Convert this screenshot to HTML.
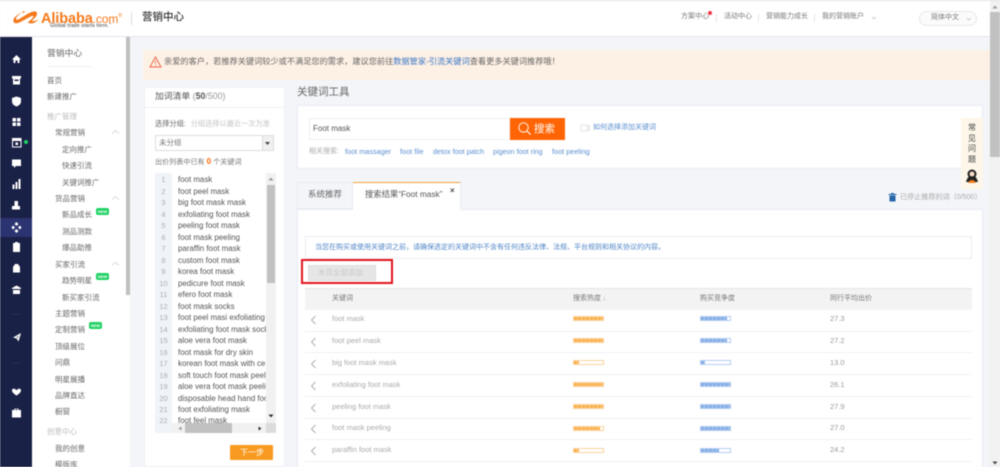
<!DOCTYPE html>
<html lang="zh"><head><meta charset="utf-8"><title>营销中心</title>
<style>
html,body{margin:0;padding:0;width:1000px;height:467px;overflow:hidden;background:#f3f5f9}
body{font-family:"Liberation Sans","Noto Sans CJK SC",sans-serif;color:#666;position:relative}
#r{position:absolute;left:0;top:0;width:1000px;height:467px;overflow:hidden;filter:blur(.45px)}
.b{position:absolute}
.t{position:absolute;white-space:nowrap;line-height:12px;height:12px}
.m{font-size:7.5px;color:#666;margin-top:.7px}
.g{color:#bbb}
.n{position:absolute;background:#1fd162;color:#fff;font-size:4px;line-height:7px;height:7px;width:13px;text-align:center;border-radius:2px;font-weight:bold}
.w{font-size:7.9px;color:#555;left:178px;margin-top:1px}
.i{font-size:7.5px;color:#aab;left:157px;width:13px;text-align:center;margin-top:1px}
.a{color:#3a76c4}
.h{font-size:7px;color:#777;top:293px}
.k{font-size:7.5px;color:#aaa;left:332px}
.v{font-size:7.5px;color:#999;left:830px}
.l{position:absolute;left:305px;width:667px;height:1px;background:#f0f1f4}
.pb{position:absolute;width:29px;height:3px;border:1px solid}
.pb i{display:block;height:3px}
.o{left:573px;border-color:#fcd3a0}.o i{background:repeating-linear-gradient(90deg,#f9b24e 0 3px,#fbc884 3px 4px)}
.u{left:700px;border-color:#b3cdf0}.u i{background:repeating-linear-gradient(90deg,#86aee6 0 3px,#a8c5ee 3px 4px)}
</style></head><body><div id="r">

<!-- header -->
<div class="b" style="left:0;top:0;width:1000px;height:37px;background:#fff;border-top:1px solid #e6e6e6;box-sizing:border-box;border-bottom:1px solid #e3e6ee"></div>
<svg class="b" style="left:11px;top:9px" width="30" height="18" viewBox="0 0 36 22"><path d="M14 4C8 6 3 10 2.500 14C2.500 18 7 18.500 12 15.500L24 9C27 7.500 28 9.500 26 11C24 13 22 15 20 16.500C25 19 30 17 33 12.500C30 15 26 15 25 14.500C29 11 33 7 31 4C29 1.500 24 3.500 20 6L10 12C7 14 5 13 6 11C7 8.500 10 6 14 4Z" fill="#f47a1c"/><path d="M13 3.500L17 2.500L15 5Z" fill="#f47a1c"/></svg>
<div class="t" style="left:41px;top:10px;font-size:14.500px;font-weight:bold;color:#f47a1c;letter-spacing:-.1px">Alibaba<span style="font-weight:normal;font-size:12px">.com</span><span style="font-size:5px;vertical-align:6px;font-weight:normal">®</span></div>
<div class="t" style="left:50px;top:18px;font-size:5.100px;font-weight:bold;color:#777">Global trade starts here.<span style="font-size:3px;vertical-align:2px">™</span></div>
<div class="b" style="left:131px;top:12px;width:1px;height:13px;background:#ddd"></div>
<div class="t" style="left:142px;top:11px;font-size:10.500px;color:#333;font-weight:500">营销中心</div>

<div class="t" style="left:681px;top:11px;font-size:7px;color:#777">方案中心</div>
<div class="b" style="left:708px;top:11px;width:4px;height:4px;border-radius:50%;background:#ee3344"></div>
<div class="b" style="left:716px;top:14px;width:1px;height:8px;background:#e4e4e4"></div>
<div class="t" style="left:724px;top:11px;font-size:7px;color:#777">活动中心</div>
<div class="b" style="left:758px;top:14px;width:1px;height:8px;background:#e4e4e4"></div>
<div class="t" style="left:766px;top:11px;font-size:7px;color:#777">营销能力成长</div>
<div class="b" style="left:814px;top:14px;width:1px;height:8px;background:#e4e4e4"></div>
<div class="t" style="left:822px;top:11px;font-size:7px;color:#777">我的营销账户</div>
<svg class="b" style="left:871px;top:16px" width="6" height="4"><path d="M1 1L3 3L5 1" fill="none" stroke="#bbb" stroke-width=".7"/></svg>
<div class="b" style="left:919px;top:11px;width:58px;height:15px;border:1px solid #e8e8e8;border-radius:8px;box-sizing:border-box;background:#fbfbfb"></div>
<div class="t" style="left:931px;top:12px;font-size:7px;color:#777">简体中文</div>
<svg class="b" style="left:966px;top:17px" width="6" height="4"><path d="M1 1L3 3L5 1" fill="none" stroke="#bbb" stroke-width=".7"/></svg>

<!-- icon sidebar -->
<div class="b" style="left:0;top:37px;width:32px;height:430px;background:#1a2146"></div>
<div class="b" style="left:0;top:218px;width:32px;height:19px;background:#2b3370"></div>
<svg class="b" style="left:0;top:37px" width="32" height="430" fill="#fff">
<path d="M16.500 18L12 22.500H13.500V26H15.500V23.500H17.500V26H19.500V22.500H21Z"/>
<path d="M12 39H21V41.500H20V47.500H13V41.500H12ZM14.500 42.500V44H18.500V42.500Z"/>
<path d="M16.500 59.500L21 61V64.500C21 67 19 68.500 16.500 69.500C14 68.500 12 67 12 64.500V61Z"/>
<path d="M12.500 81H16V84.500H12.500ZM17 81H20.500V84.500H17ZM12.500 85.500H16V89H12.500ZM17 85.500H20.500V89H17Z"/>
<path d="M12 101H21.500V110.500H12ZM13 104V109.500H20.500V104ZM15.500 105.500H18V108H15.500Z" fill-rule="evenodd"/>
<path d="M12 122.500H21V129H16L14 131V129H12Z"/>
<path d="M12.500 147.500H14.500V152H12.500ZM15.500 145H17.500V152H15.500ZM18.500 142H20.500V152H18.500Z"/>
<path d="M14.500 164H18V169H20V172.500H12V169H14.500Z"/>
<path d="M16.500 185L18.500 187L16.500 189L14.500 187ZM13 188.500L15 190.500L13 192.500L11.500 190.500ZM20 188.500L21.500 190.500L20 192.500L18 190.500ZM16.500 192L18.500 194L16.500 196L14.500 194Z"/>
<path d="M13 206H15V205H18V206H20V215H13Z"/>
<path d="M15 227H18L20 230V235.500H13V230Z"/>
<path d="M16.500 248.500L21 251V252H12V251ZM13 253H20V257H13Z"/>
<rect x="12" y="277" width="9" height=".6" fill="#333a5e"/>
<path d="M21 296L18.500 304.500L16.500 301.500L13 300.500ZM16.500 300.500L19 298.500L17.500 301Z" fill-rule="evenodd"/>
<rect x="12" y="326" width="9" height=".6" fill="#333a5e"/>
<path d="M16.500 353.500C15 351 12 351 12 353.500C12 355.500 15 357.500 16.500 358.500C18 357.500 21 355.500 21 353.500C21 351 18 351 16.500 353.500Z"/>
<path d="M12 373H14.500V371.500H18.500V373H21V380.500H12ZM15.500 372V373H17.500V372Z" fill-rule="evenodd"/>
</svg>
<div class="b" style="left:24px;top:140px;width:4px;height:4px;border-radius:50%;background:#1fd162"></div>

<!-- menu -->
<div class="b" style="left:32px;top:37px;width:98px;height:430px;background:#fff"></div>
<div class="b" style="left:126px;top:37px;width:4px;height:258px;background:#bfbfbf"></div>
<div class="t" style="left:47px;top:47px;font-size:8.800px;color:#666">营销中心</div>
<div class="b" style="left:47px;top:66px;width:46px;height:1px;background:#f2f2f2"></div>
<div class="t m" style="left:47px;top:74px">首页</div>
<div class="t m" style="left:47px;top:90px">新建推广</div>
<div class="t m g" style="left:47px;top:110px">推广管理</div>
<div class="t m" style="left:55px;top:126px">常规营销</div>
<div class="t m" style="left:62px;top:143px">定向推广</div>
<div class="t m" style="left:62px;top:159px">快速引流</div>
<div class="t m" style="left:62px;top:176px">关键词推广</div>
<div class="t m" style="left:55px;top:192px">货品营销</div>
<div class="t m" style="left:62px;top:208px">新品成长</div>
<div class="t m" style="left:62px;top:225px">测品测款</div>
<div class="t m" style="left:62px;top:241px">爆品助推</div>
<div class="t m" style="left:55px;top:258px">买家引流</div>
<div class="t m" style="left:62px;top:274px">趋势明星</div>
<div class="t m" style="left:62px;top:291px">新买家引流</div>
<div class="t m" style="left:55px;top:307px">主题营销</div>
<div class="t m" style="left:55px;top:323px">定制营销</div>
<div class="t m" style="left:55px;top:340px">顶级展位</div>
<div class="t m" style="left:55px;top:356px">问鼎</div>
<div class="t m" style="left:55px;top:373px">明星展播</div>
<div class="t m" style="left:55px;top:389px">品牌直达</div>
<div class="t m" style="left:55px;top:405px">橱窗</div>
<div class="t m g" style="left:47px;top:425px">创意中心</div>
<div class="t m" style="left:55px;top:442px">我的创意</div>
<div class="t m" style="left:55px;top:458px">模版库</div>
<div class="n" style="left:96px;top:208px">NEW</div>
<div class="n" style="left:96px;top:273px">NEW</div>
<div class="n" style="left:89px;top:322px">NEW</div>
<svg class="b" style="left:111px;top:129px" width="9" height="6"><path d="M1 4.500L4.500 1.500L8 4.500" fill="none" stroke="#ccc" stroke-width=".7"/></svg>
<svg class="b" style="left:111px;top:195px" width="9" height="6"><path d="M1 4.500L4.500 1.500L8 4.500" fill="none" stroke="#ccc" stroke-width=".7"/></svg>
<svg class="b" style="left:111px;top:261px" width="9" height="6"><path d="M1 4.500L4.500 1.500L8 4.500" fill="none" stroke="#ccc" stroke-width=".7"/></svg>

<!-- alert -->
<div class="b" style="left:143px;top:50px;width:847px;height:30px;background:#fdf0e5"></div>
<svg class="b" style="left:149px;top:56px" width="13" height="12"><path d="M6.500 1L12 11H1Z" fill="none" stroke="#ee6a4a" stroke-width="1"/><path d="M6.500 4.500V8M6.500 8.800V10" stroke="#ee6a4a" stroke-width=".8"/></svg>
<div class="t" style="left:164px;top:56px;font-size:8.200px;color:#666">亲爱的客户，若推荐关键词较少或不满足您的需求，建议您前往<span class="a">数据管家-引流关键词</span>查看更多关键词推荐哦！</div>

<!-- left panel -->
<div class="b" style="left:144px;top:87px;width:141px;height:380px;background:#fff;border:1px solid #edf0f5;box-sizing:border-box"></div>
<div class="b" style="left:144px;top:107px;width:141px;height:1px;background:#eef0f4"></div>
<div class="t" style="left:155px;top:90px;font-size:8.800px;color:#555">加词清单 <span style="color:#999">(<b style="color:#555">50</b>/500)</span></div>
<div class="t" style="left:155px;top:118px;font-size:7.200px;color:#666">选择分组: <span style="color:#c4c4c4;margin-left:3px">分组选择以最近一次为准</span></div>
<div class="b" style="left:155px;top:135px;width:119px;height:16px;border:1px solid #ddd;box-sizing:border-box;background:#fff"></div>
<div class="b" style="left:262px;top:136px;width:11px;height:14px;background:#f0f0f0;border-left:1px solid #ddd;box-sizing:border-box"></div>
<svg class="b" style="left:265px;top:142px" width="5" height="3"><path d="M0 0H5L2.500 3Z" fill="#444"/></svg>
<div class="t" style="left:159px;top:137px;font-size:7.500px;color:#777">未分组</div>
<div class="t" style="left:155px;top:156px;font-size:7.100px;color:#777">出价列表中已有 <b style="color:#f60;font-size:8px">0</b> 个关键词</div>

<div class="b" style="left:155px;top:173px;width:121px;height:260px;background:#fff;overflow:hidden">
<div class="b" style="left:0;top:0;width:17px;height:260px;background:#f0f3f7"></div>
</div>
<div class="t i" style="top:173px">1</div><div class="t w" style="top:173px">foot mask</div>
<div class="t i" style="top:184.500px">2</div><div class="t w" style="top:184.500px">foot peel mask</div>
<div class="t i" style="top:196px">3</div><div class="t w" style="top:196px">big foot mask mask</div>
<div class="t i" style="top:207.500px">4</div><div class="t w" style="top:207.500px">exfoliating foot mask</div>
<div class="t i" style="top:219px">5</div><div class="t w" style="top:219px">peeling foot mask</div>
<div class="t i" style="top:230.500px">6</div><div class="t w" style="top:230.500px">foot mask peeling</div>
<div class="t i" style="top:242px">7</div><div class="t w" style="top:242px">paraffin foot mask</div>
<div class="t i" style="top:253.500px">8</div><div class="t w" style="top:253.500px">custom foot mask</div>
<div class="t i" style="top:265px">9</div><div class="t w" style="top:265px">korea foot mask</div>
<div class="t i" style="top:276.500px">10</div><div class="t w" style="top:276.500px">pedicure foot mask</div>
<div class="t i" style="top:288px">11</div><div class="t w" style="top:288px">efero foot mask</div>
<div class="t i" style="top:299.500px">12</div><div class="t w" style="top:299.500px">foot mask socks</div>
<div class="t i" style="top:311px">13</div><div class="t w" style="top:311px">foot peel masi exfoliating</div>
<div class="t i" style="top:322.500px">14</div><div class="t w" style="top:322.500px">exfoliating foot mask sock</div>
<div class="t i" style="top:334px">15</div><div class="t w" style="top:334px">aloe vera foot mask</div>
<div class="t i" style="top:345.500px">16</div><div class="t w" style="top:345.500px">foot mask for dry skin</div>
<div class="t i" style="top:357px">17</div><div class="t w" style="top:357px">korean foot mask with ce</div>
<div class="t i" style="top:368.500px">18</div><div class="t w" style="top:368.500px">soft touch foot mask peeli</div>
<div class="t i" style="top:380px">19</div><div class="t w" style="top:380px">aloe vera foot mask peelir</div>
<div class="t i" style="top:391.500px">20</div><div class="t w" style="top:391.500px">disposable head hand foo</div>
<div class="t i" style="top:403px">21</div><div class="t w" style="top:403px">foot exfoliating mask</div>
<div class="t i" style="top:413.500px">22</div><div class="t w" style="top:413.500px">foot feel mask</div>
<div class="b" style="left:266px;top:173px;width:10px;height:260px;background:#f1f1f1"></div>
<div class="b" style="left:267px;top:185px;width:8px;height:98px;background:#c1c1c1"></div>
<svg class="b" style="left:268px;top:177px" width="6" height="4"><path d="M3 0.500L5.500 3.500H.5Z" fill="#999"/></svg>
<svg class="b" style="left:268px;top:414px" width="6" height="4"><path d="M3 3.500L5.500 .5H.5Z" fill="#333"/></svg>
<div class="b" style="left:172px;top:423px;width:104px;height:10px;background:#f1f1f1"></div>
<div class="b" style="left:185px;top:423px;width:47px;height:10px;background:#c1c1c1"></div>
<div class="b" style="left:266px;top:423px;width:10px;height:10px;background:#dcdcdc"></div>
<svg class="b" style="left:178px;top:426px" width="4" height="5"><path d="M.5 2.500L3.500 .5V4.500Z" fill="#999"/></svg>
<svg class="b" style="left:258px;top:426px" width="4" height="5"><path d="M3.500 2.500L.5 .5V4.500Z" fill="#333"/></svg>
<div class="b" style="left:230px;top:445px;width:43px;height:15px;background:#f99a20;border-radius:1px"></div>
<div class="t" style="left:240px;top:447px;font-size:8px;color:#fff">下一步</div>

<!-- keyword tool -->
<div class="t" style="left:297px;top:86px;font-size:10.500px;color:#666">关键词工具</div>
<div class="b" style="left:297px;top:105px;width:686px;height:64px;background:#fff;border:1px solid #e8ebf1;box-sizing:border-box"></div>
<div class="b" style="left:309px;top:118px;width:201px;height:22px;border:1px solid #eee;box-sizing:border-box"></div>
<div class="t" style="left:313px;top:123px;font-size:8px;color:#555">Foot mask</div>
<div class="b" style="left:510px;top:118px;width:55px;height:22px;background:#ff6505"></div>
<svg class="b" style="left:517px;top:121px" width="15" height="15"><circle cx="6.500" cy="6.500" r="4.700" fill="none" stroke="#fff" stroke-width=".9"/><path d="M10 10L13.500 13.500" stroke="#fff" stroke-width="1.100"/></svg>
<div class="t" style="left:534px;top:123px;font-size:10.500px;color:#fff">搜索</div>
<svg class="b" style="left:580px;top:124px" width="10" height="8"><path d="M1 1H7.500V7H1Z M7.500 3L9.500 2V6L7.500 5" fill="none" stroke="#ccc" stroke-width=".6"/></svg>
<div class="t a" style="left:593px;top:122px;font-size:7px;color:#5b8fd0">如何选择添加关键词</div>
<div class="t" style="left:309px;top:146px;font-size:7px;color:#aaa">相关搜索:</div>
<div class="t a" style="left:345px;top:146px;font-size:7.300px;color:#5b8fd0">foot massager</div>
<div class="t a" style="left:400px;top:146px;font-size:7.300px;color:#5b8fd0">foot file</div>
<div class="t a" style="left:433px;top:146px;font-size:7.200px;color:#5b8fd0">detox foot patch</div>
<div class="t a" style="left:493px;top:146px;font-size:7.200px;color:#5b8fd0">pigeon foot ring</div>
<div class="t a" style="left:552px;top:146px;font-size:7.300px;color:#5b8fd0">foot peeling</div>

<!-- floating -->
<div class="b" style="left:961px;top:118px;width:22px;height:71px;background:#fdf6e9"></div>
<div class="t" style="left:968px;top:123px;font-size:8px;color:#444;line-height:10.500px;height:44px;width:9px;white-space:normal">常见问题</div>
<svg class="b" style="left:964px;top:168px" width="16" height="16"><circle cx="8" cy="6" r="4.500" fill="#222"/><path d="M2 14C3 10 5 9 5 7H11C11 9 13 10 14 14Z" fill="#222"/><circle cx="8" cy="6" r="2.500" fill="#f6dcc9"/><path d="M4.500 15C5 11 11 11 11.500 15Z" fill="#f47a1c"/></svg>

<!-- tabs -->
<div class="b" style="left:297px;top:182px;width:56px;height:27px;background:#f3f5f9;border:1px solid #e8ebf1;box-sizing:border-box"></div>
<div class="t" style="left:308px;top:188px;font-size:8.500px;color:#666">系统推荐</div>
<div class="b" style="left:297px;top:209px;width:686px;height:258px;background:#fff;border:1px solid #e8ebf1;border-bottom:0;box-sizing:border-box"></div>
<div class="b" style="left:353px;top:182px;width:108px;height:28px;background:#fff;border-top:1px solid #f8a03c;border-right:1px solid #e8ebf1;box-sizing:border-box"></div>
<div class="t" style="left:365px;top:188px;font-size:8.300px;color:#555">搜索结果“Foot mask”</div>
<div class="t" style="left:450px;top:185px;font-size:8px;color:#444;font-weight:bold">×</div>
<svg class="b" style="left:888px;top:192px" width="9" height="10"><path d="M3 1H6V2H8.500V3H.5V2H3ZM1.500 3.500H7.500V9.500H1.500Z" fill="#2566a8"/></svg>
<div class="t" style="left:900px;top:191px;font-size:7.100px;color:#aaa">已停止推荐的词（0/500）</div>

<!-- info -->
<div class="b" style="left:305px;top:236px;width:667px;height:23px;border:1px solid #e9edf3;box-sizing:border-box"></div>
<div class="t" style="left:315px;top:241.500px;font-size:7px;color:#4f86c8">当您在购买或使用关键词之前，请确保选定的关键词中不含有任何违反法律、法规、平台规则和相关协议的内容。</div>
<div class="b" style="left:301px;top:259px;width:92px;height:25px;border:2px solid #e2141c;box-sizing:border-box"></div>
<div class="b" style="left:308px;top:265px;width:68px;height:16px;background:#e6e6e6;border:1px solid #ddd;box-sizing:border-box"></div>
<div class="t" style="left:318px;top:267px;font-size:7.500px;color:#c8c8c8">本页全部添加</div>

<!-- table -->
<div class="b" style="left:305px;top:288px;width:667px;height:22px;background:#f3f3f3;border-top:1px solid #e6e6e6;box-sizing:border-box"></div>
<div class="t h" style="left:332px">关键词</div>
<div class="t h" style="left:573px">搜索热度 <span style="font-size:5px">↓</span></div>
<div class="t h" style="left:700px">购买竞争度</div>
<div class="t h" style="left:830px">同行平均出价</div>

<div class="t k" style="top:313px">foot mask</div><div class="pb o" style="top:316px"><i style="width:100%"></i></div><div class="pb u" style="top:316px"><i style="width:90%"></i></div><div class="t v" style="top:313px">27.3</div><div class="l" style="top:331px"></div>
<div class="t k" style="top:335px">foot peel mask</div><div class="pb o" style="top:338px"><i style="width:100%"></i></div><div class="pb u" style="top:338px"><i style="width:90%"></i></div><div class="t v" style="top:335px">27.2</div><div class="l" style="top:352px"></div>
<div class="t k" style="top:357px">big foot mask mask</div><div class="pb o" style="top:360px"><i style="width:18%"></i></div><div class="pb u" style="top:360px"><i style="width:15%"></i></div><div class="t v" style="top:357px">13.0</div><div class="l" style="top:374px"></div>
<div class="t k" style="top:379px">exfoliating foot mask</div><div class="pb o" style="top:382px"><i style="width:100%"></i></div><div class="pb u" style="top:382px"><i style="width:100%"></i></div><div class="t v" style="top:379px">26.1</div><div class="l" style="top:396px"></div>
<div class="t k" style="top:401px">peeling foot mask</div><div class="pb o" style="top:404px"><i style="width:100%"></i></div><div class="pb u" style="top:404px"><i style="width:100%"></i></div><div class="t v" style="top:401px">27.9</div><div class="l" style="top:418px"></div>
<div class="t k" style="top:422px">foot mask peeling</div><div class="pb o" style="top:426px"><i style="width:90%"></i></div><div class="pb u" style="top:426px"><i style="width:100%"></i></div><div class="t v" style="top:422px">27.0</div><div class="l" style="top:439px"></div>
<div class="t k" style="top:444px">paraffin foot mask</div><div class="pb o" style="top:448px"><i style="width:18%"></i></div><div class="pb u" style="top:448px"><i style="width:63%"></i></div><div class="t v" style="top:444px">24.2</div><div class="l" style="top:461px"></div>
<svg class="b" style="left:310px;top:314px" width="8" height="148" fill="none" stroke="#aaa" stroke-width=".9"><path d="M5.500 2L1.500 6L5.500 10M5.500 24L1.500 28L5.500 32M5.500 46L1.500 50L5.500 54M5.500 68L1.500 72L5.500 76M5.500 90L1.500 94L5.500 98M5.500 111L1.500 115L5.500 119M5.500 133L1.500 137L5.500 141"/></svg>

<!-- page scrollbar -->
<div class="b" style="left:990px;top:1px;width:10px;height:466px;background:#f1f1f1"></div>
<div class="b" style="left:990px;top:12px;width:10px;height:145px;background:#c1c1c1"></div>
<svg class="b" style="left:992px;top:5px" width="6" height="4"><path d="M3 .5L5.500 3.500H.5Z" fill="#999"/></svg>
<svg class="b" style="left:992px;top:461px" width="6" height="4"><path d="M3 3.500L5.500 .5H.5Z" fill="#444"/></svg>

</div></body></html>
